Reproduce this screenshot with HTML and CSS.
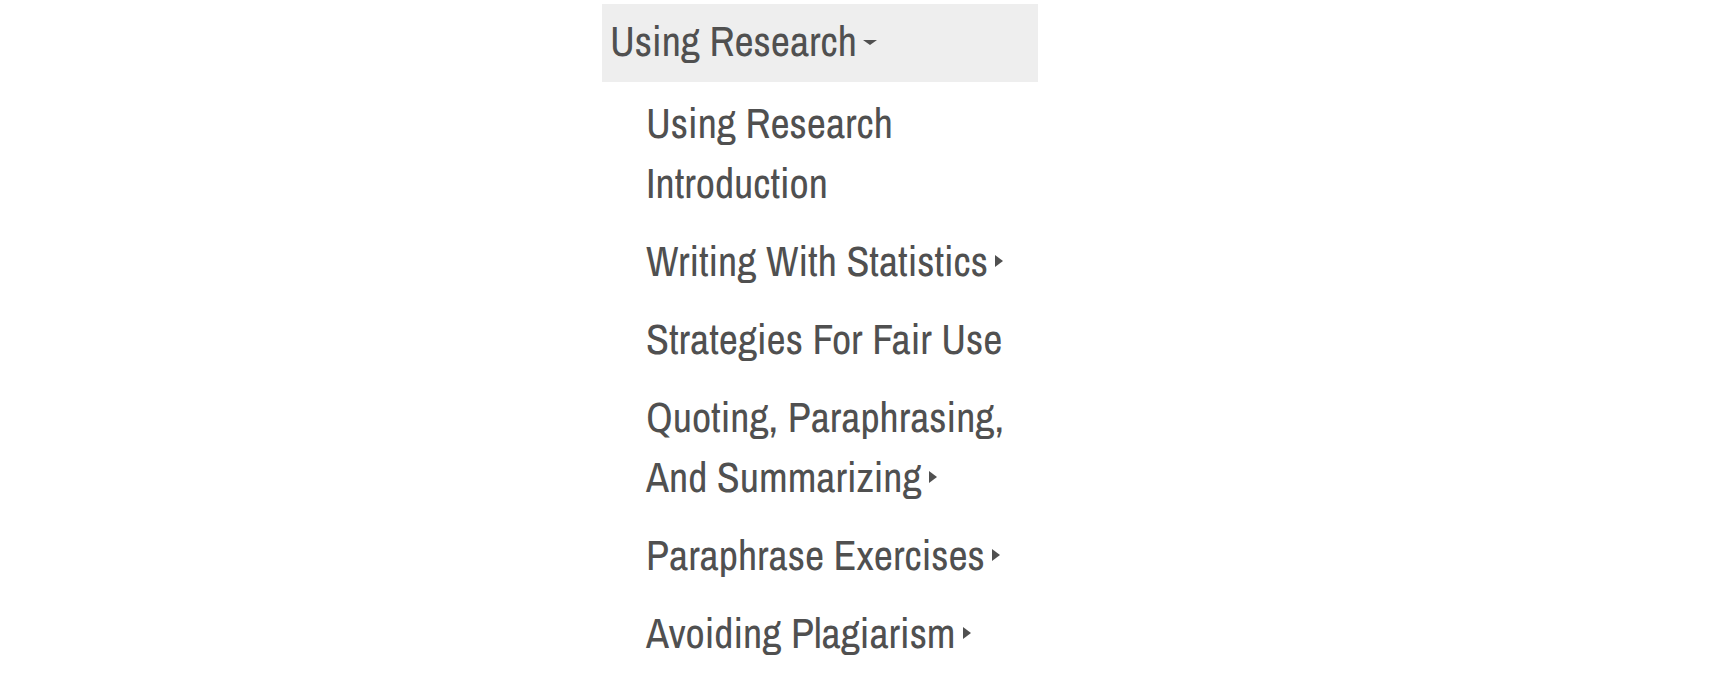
FILE: index.html
```html
<!DOCTYPE html>
<html lang="en">
<head>
    <meta charset="UTF-8">
    <meta name="viewport" content="width=device-width, initial-scale=1.0">
    <title>Using Research</title>
    <link rel="stylesheet" href="styles.css">
</head>
<body>
    <div class="side-nav">
        <ul class="nav-list">
            <li class="nav-item open">
                <a href="#" class="nav-heading">Using Research<span class="caret"></span></a>
                <ul class="sub-list">
                    <li class="sub-item"><a href="#">Using Research Introduction</a></li>
                    <li class="sub-item"><a href="#">Writing With Statistics<span class="arrow"></span></a></li>
                    <li class="sub-item"><a href="#">Strategies For Fair Use</a></li>
                    <li class="sub-item"><a href="#">Quoting, Paraphrasing, And Summarizing<span class="arrow"></span></a></li>
                    <li class="sub-item"><a href="#">Paraphrase Exercises<span class="arrow"></span></a></li>
                    <li class="sub-item"><a href="#">Avoiding Plagiarism<span class="arrow"></span></a></li>
                </ul>
            </li>
        </ul>
    </div>
</body>
</html>
```

FILE: styles.css
```css
*{
    margin: 0;
    padding: 0;
}
body{
    background: #fff;
    font-family: "Liberation Sans Narrow", "Archivo Narrow", "DejaVu Sans Condensed", sans-serif;
    color: #505050;
}
.side-nav{
    width: 436px;
    margin-left: 602px;
    padding-top: 4px;
}
.nav-list, .sub-list{
    list-style: none;
}
a{
    color: #505050;
    text-decoration: none;
}
.nav-heading{
    display: block;
    background: #eee;
    padding: 7px 8px 11px;
    font-size: 42px;
    line-height: 60px;
}
.caret{
    display: inline-block;
    width: 0;
    height: 0;
    margin-left: 6px;
    border-top: 5px solid #505050;
    border-left: 7px solid transparent;
    border-right: 7px solid transparent;
    vertical-align: 11px;
}
.sub-list{
    margin-top: 4px;
}
.sub-item a{
    display: block;
    padding: 7px 0 11px 44px;
    font-size: 42px;
    line-height: 60px;
}
.arrow{
    display: inline-block;
    width: 0;
    height: 0;
    margin-left: 7px;
    border-left: 8px solid #505050;
    border-top: 6px solid transparent;
    border-bottom: 6px solid transparent;
    vertical-align: 9px;
}
```
